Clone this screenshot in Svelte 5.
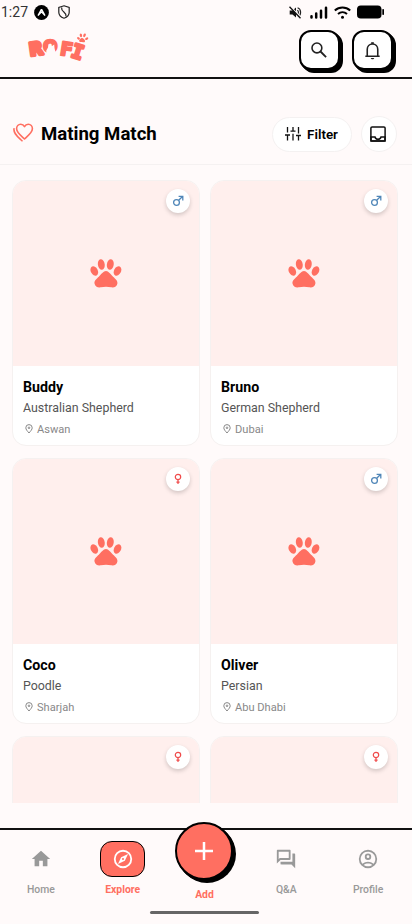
<script>
	let active = 'Explore';

	const pets = [
		{ name: 'Buddy', breed: 'Australian Shepherd', city: 'Aswan', sex: 'male' },
		{ name: 'Bruno', breed: 'German Shepherd', city: 'Dubai', sex: 'male' },
		{ name: 'Coco', breed: 'Poodle', city: 'Sharjah', sex: 'female' },
		{ name: 'Oliver', breed: 'Persian', city: 'Abu Dhabi', sex: 'male' },
		{ name: '', breed: '', city: '', sex: 'female' },
		{ name: '', breed: '', city: '', sex: 'female' }
	];

	const tabs = [
		{ label: 'Home', icon: 'M10 20v-6h4v6h5v-8h3L12 3 2 12h3v8z' },
		{ label: 'Explore', icon: 'M12 2a10 10 0 1 0 0 20 10 10 0 0 0 0-20zm0 18a8 8 0 1 1 0-16 8 8 0 0 1 0 16zm-5.500-2.500 7.510-3.490L17.500 6.500 9.990 9.990 6.500 17.500zm5.500-6.600a1.100 1.100 0 1 1 0 2.200 1.100 1.100 0 0 1 0-2.200z' },
		{ label: 'Add', icon: '' },
		{ label: 'Q&A', icon: 'M15 4v7H5.170L4 12.170V4h11m1-2H3c-.55 0-1 .45-1 1v14l4-4h10c.55 0 1-.45 1-1V3c0-.55-.45-1-1-1zm5 4h-2v9H6v2c0 .55.45 1 1 1h11l4 4V7c0-.55-.45-1-1-1z' },
		{ label: 'Profile', icon: 'M12 2a10 10 0 1 0 0 20 10 10 0 0 0 0-20zM7.350 18.500C8.660 17.560 10.260 17 12 17s3.340.56 4.650 1.500C15.340 19.440 13.740 20 12 20s-3.340-.56-4.650-1.500zm10.790-1.380a9.950 9.950 0 0 0-12.280 0A8 8 0 1 1 20 12c0 1.950-.7 3.730-1.860 5.120zM12 6a3.500 3.500 0 1 0 0 7 3.500 3.500 0 0 0 0-7zm0 5a1.500 1.500 0 1 1 0-3 1.500 1.500 0 0 1 0 3z' }
	];

	const select = (label) => {
		active = label;
	};
</script>

<div class="screen">
	<div class="status">
		<div class="statusLeft">
			<span>1:27</span>
			<svg width="15" height="15" viewBox="0 0 15 15">
				<circle cx="7.5" cy="7.5" r="7.400" fill="#000" />
				<path d="M4 10.600 7.200 4.700h.6L11 10.600M4 10.600l3.500-3.700 3.500 3.700" fill="none" stroke="#fff" stroke-width="1.300" />
			</svg>
			<svg class="shield" width="12" height="14" viewBox="0 0 12 14" fill="none" stroke="#222" stroke-width="1.200">
				<path d="M6 .8 11.200 2.500v4.700c0 2.900-2.200 5-5.200 6-3-1-5.200-3.100-5.200-6V2.500z" />
				<path d="M3.600 2.500C2.800 7.200 9 7 8 11.500" />
			</svg>
		</div>
		<div class="statusRight">
			<svg class="mute" width="13" height="13" viewBox="0 0 13 13">
				<path d="M.7 4.500h2.800L7 1.500v10l-3.500-3H.7z" fill="#111" />
				<path d="M8.300 4.300c1.500.8 1.500 3.300 0 4.200M8.600 1.800c3.900 1.300 3.900 7.200.5 9" fill="none" stroke="#222" stroke-width="1.200" />
				<path d="m1.500.5 11 11.500" stroke="#fffafa" stroke-width="1.300" />
				<path d="m.5.700 11 11.500" stroke="#111" stroke-width="1.300" />
			</svg>
			<svg class="signal" width="18" height="13" viewBox="0 0 18 13" stroke="#000" stroke-width="2.500" stroke-linecap="round">
				<path d="M1.500 10.200v1.300M6.200 7.500v4M11 4.700v6.800M16 1.700v9.800" />
			</svg>
			<svg class="wifi" width="17" height="13" viewBox="0 0 17 13" fill="none" stroke="#000" stroke-width="2">
				<path d="M.8 4.500c4.400-4 11-4 15.400 0M4 8c2.600-2.300 6.400-2.300 9 0" />
				<circle cx="8.500" cy="11.300" r="1.500" fill="#000" stroke="none" />
			</svg>
			<svg width="28" height="14" viewBox="0 0 28 14">
				<rect x="0" y=".5" width="24.500" height="13" rx="3.800" />
				<rect x="25.300" y="4" width="1.700" height="6" rx=".8" />
			</svg>
		</div>
	</div>

	<header>
		<svg class="logo" width="64" height="32" viewBox="0 0 64 32" fill="#ff6f61" stroke="#ff6f61" stroke-linejoin="round">
			<text class="letter" x="3" y="23.300" font-size="18" stroke-width="3.200" transform="rotate(-8 9 17)">R</text>
			<text class="letter" x="17.300" y="19.500" font-size="16.500" stroke-width="2.500">O</text>
			<path d="M20.300 25v-6.500l1.700-3 .8-3.400 1.800 2.100 1.500-.2 2.100-1.600.3 3.500.8 3.500V25z" fill="#fffafa" stroke="none" />
			<text class="letter" x="34.200" y="23.500" font-size="19" stroke-width="1.900" transform="rotate(9 39 17)">F</text>
			<text class="bone" x="46" y="26.300" font-size="19.500" stroke-width="2.600" transform="rotate(18 51 19)">I</text>
			<g stroke="none">
				<ellipse cx="52.500" cy="6.300" rx="1.100" ry="1.600" transform="rotate(-50 52.500 6.300)" />
				<ellipse cx="54.900" cy="3.300" rx="1.200" ry="1.900" transform="rotate(-10 54.900 3.300)" />
				<ellipse cx="58.500" cy="3.300" rx="1.200" ry="1.900" transform="rotate(25 58.500 3.300)" />
				<ellipse cx="60.700" cy="6.700" rx="1.100" ry="1.700" transform="rotate(60 60.700 6.700)" />
				<path d="M56.400 5.900c1.700.5 3.200 2.700 2.500 3.900-.7 1-1.700.2-3 .2s-2.300.3-2.700-.7c-.4-1.300 1.700-3.600 3.200-3.400z" />
			</g>
		</svg>
		<div class="actions">
			<button class="square" aria-label="Search">
				<svg width="20" height="20" viewBox="0 0 24 24" fill="none" stroke="#222" stroke-width="1.900">
					<circle cx="9.500" cy="9.500" r="5.900" />
					<path d="m13.800 13.800 6.700 6.700" stroke-width="2.200" />
				</svg>
			</button>
			<button class="square" aria-label="Notifications">
				<svg width="21" height="21" viewBox="0 0 24 24" fill="none" stroke="#222" stroke-width="1.800">
					<path d="M3.800 18.500h16.400M6 18.500V10.700C6 7 8.500 4.500 12 4.500s6 2.500 6 6.200v7.800" />
					<path d="M12 2.500v2" stroke-width="3" />
					<path d="M10 20.500h4c-.3 1-1 1.500-2 1.500s-1.700-.5-2-1.500z" fill="#222" stroke="none" />
				</svg>
			</button>
		</div>
	</header>

	<div class="titleBar">
		<svg class="hearts" width="22" height="20" viewBox="0 0 22 20" fill="none" stroke="#ff6f61" stroke-width="1.600" stroke-linecap="round" stroke-linejoin="round">
			<path d="M11.500 16C8.200 12.900 3.600 9.600 3.600 5.800c0-2.600 1.800-4.500 4.100-4.500 1.700 0 3 .8 3.800 2.300.8-1.500 2.100-2.300 3.800-2.300 2.300 0 4.100 1.900 4.100 4.500 0 3.800-4.600 7.100-7.900 10.200z" />
			<path d="M1 5.700C.3 10.500 4.600 13.500 9 17.800" />
		</svg>
		<h1>Mating Match</h1>
		<button class="filter">
			<svg width="16" height="16" viewBox="0 0 16 16" stroke="#111" stroke-width="1.300" fill="none">
				<path d="M2.500 1v5.500M0 9h5M2.500 9v5.500M8 1v4M5.500 5.200h5M8 7.800v6.700M13.500 1v6.500M11 9.500h5M13.500 9.500v5" />
			</svg>
			Filter
		</button>
		<button class="inbox" aria-label="Inbox">
			<svg width="16" height="16" viewBox="0 0 16 16" fill="none" stroke="#111" stroke-width="1.500">
				<rect x=".9" y=".9" width="14.200" height="14.200" rx="1.200" />
				<path d="M1 11h4c.7 3 5.300 3 6 0h4v4H1z" />
			</svg>
		</button>
	</div>

	<main>
		{#each pets as pet}
			<div class="card">
				<div class="photo">
					<svg width="32" height="29" viewBox="0 0 32 29" fill="#ff6f61">
						<ellipse cx="4.300" cy="12" rx="3.500" ry="5" transform="rotate(-27 4.300 12)" />
						<ellipse cx="11.300" cy="5.500" rx="3.400" ry="5.300" transform="rotate(-8 11.300 5.500)" />
						<ellipse cx="20.300" cy="5.500" rx="3.400" ry="5.300" transform="rotate(8 20.300 5.500)" />
						<ellipse cx="27.500" cy="12" rx="3.500" ry="5" transform="rotate(27 27.500 12)" />
						<path d="M16 12c-2.600 0-4.700 3.200-7.200 5.700C6.300 20.100 4 21.700 4.500 24.500c.6 3 3.200 4.300 6.300 3.800 3.500-.7 6.900-.7 10.400 0 3.100.5 5.700-.8 6.200-3.800.5-2.800-1.800-4.400-4.300-6.800-2.500-2.500-4.500-5.700-7.100-5.700z" />
					</svg>
					<div class="sex {pet.sex}">
						{#if pet.sex === 'male'}
							<svg width="12" height="12" viewBox="0 0 12 12" fill="none" stroke="#4f86b8" stroke-width="1.300">
								<circle cx="4.500" cy="7.500" r="2.900" />
								<path d="M6.700 5.300 10.500 1.500M6.600 1.300h4.200v4.200" />
							</svg>
						{:else}
							<svg width="12" height="12" viewBox="0 0 12 12" fill="none" stroke="#f04b4b" stroke-width="1.200">
								<circle cx="6" cy="4" r="2.700" />
								<path d="M6 7v4M4.400 9.200h3.200" />
							</svg>
						{/if}
					</div>
				</div>
				{#if pet.name}
					<div class="info">
						<div class="name">{pet.name}</div>
						<div class="breed">{pet.breed}</div>
						<div class="city">
							<svg width="8" height="10" viewBox="0 0 8 10" fill="none" stroke="#888" stroke-width="1">
								<path d="M4 9C2.200 6.900.8 5.400.8 3.800a3.200 3.200 0 0 1 6.400 0C7.200 5.400 5.800 6.900 4 9z" />
								<circle cx="4" cy="3.800" r=".8" />
							</svg>
							{pet.city}
						</div>
					</div>
				{/if}
			</div>
		{/each}
	</main>

	<nav>
		{#each tabs as tab}
			<button class="tab" class:active={tab.label === active} class:add={tab.label === 'Add'} on:click={() => select(tab.label)}>
				{#if tab.label === 'Add'}
					<span class="plus">
						<svg width="20" height="20" viewBox="0 0 20 20" stroke="#fff" stroke-width="2.500">
							<path d="M10 1v18M1 10h18" />
						</svg>
					</span>
				{:else}
					<span class="pill">
						<svg width="22" height="22" viewBox="0 0 24 24" fill="currentColor" fill-rule="evenodd">
							<path d={tab.icon} />
						</svg>
					</span>
				{/if}
				<span class="label">{tab.label}</span>
			</button>
		{/each}
	</nav>
	<div class="handle"></div>
</div>

<style>
	:global(body) {
		background: #fffafa;
	}

	.screen {
		width: 412px;
		height: 924px;
		display: flex;
		flex-direction: column;
		overflow: hidden;
		background: #fffafa;
		font-family: Roboto, sans-serif;
		color: #000;
	}

	button {
		margin: 0;
		padding: 0;
		border: none;
		background: none;
		font-family: inherit;
		color: inherit;
	}

	svg {
		display: block;
		flex: none;
	}

	.status {
		height: 24px;
		box-sizing: border-box;
		padding: 0 27px 0 1px;
		display: flex;
		justify-content: space-between;
		align-items: center;
		font-size: 14px;
		color: #333;
	}

	.statusLeft, .statusRight {
		display: flex;
		align-items: center;
	}

	.statusLeft span {
		width: 33px;
		margin-top: -1px;
	}

	.shield {
		margin-left: 9px;
	}

	.signal {
		margin-left: 8px;
	}

	.wifi {
		margin: 0 6px;
	}

	header {
		height: 55px;
		box-sizing: border-box;
		padding: 6px 19px 0 26px;
		display: flex;
		justify-content: space-between;
		border-bottom: 2px solid #111;
	}

	.logo {
		margin-top: 2px;
	}

	.letter {
		font-family: "DejaVu Sans", sans-serif;
		font-weight: 700;
	}

	.bone {
		font-family: "DejaVu Sans Mono", monospace;
		font-weight: 700;
	}

	.actions {
		display: flex;
		gap: 12px;
	}

	.square {
		width: 41px;
		height: 40px;
		display: flex;
		justify-content: center;
		align-items: center;
		box-sizing: border-box;
		border: 2px solid #000;
		border-radius: 12px;
		background: #fff;
		box-shadow: 1px 1px 0 #000, 2px 2px 0 #000, 3px 3px 0 #000;
	}

	.square svg {
		margin-right: 1px;
	}

	.titleBar {
		height: 86px;
		box-sizing: border-box;
		padding: 25px 15px 0 13px;
		display: flex;
		align-items: center;
		border-bottom: 1px solid #f5f1f1;
	}

	.hearts {
		margin-top: -2px;
	}

	h1 {
		flex: 1;
		margin: 0 0 0 6px;
		font-size: 18.600px;
		font-weight: 700;
		white-space: nowrap;
	}

	.filter {
		width: 80px;
		height: 35px;
		display: flex;
		align-items: center;
		justify-content: center;
		gap: 6px;
		box-sizing: border-box;
		padding-right: 1px;
		border: 1px solid #f4f1f1;
		border-radius: 18px;
		background: #fff;
		font-size: 13.400px;
		font-weight: 600;
	}

	.inbox {
		width: 36px;
		height: 36px;
		margin-left: 9px;
		display: flex;
		align-items: center;
		justify-content: center;
		box-sizing: border-box;
		padding-right: 2px;
		border: 1px solid #f4f1f1;
		border-radius: 50%;
		background: #fff;
	}

	main {
		height: 638px;
		box-sizing: border-box;
		margin-bottom: 25px;
		padding: 15px 14px 0 12px;
		flex: none;
		display: grid;
		grid-template-columns: 188px 188px;
		grid-auto-rows: 266px;
		gap: 12px 10px;
		overflow: hidden;
	}

	.card {
		box-sizing: border-box;
		border: 1px solid #f5f1f0;
		border-radius: 14px;
		background: #fff;
		overflow: hidden;
	}

	.photo {
		height: 185px;
		position: relative;
		display: flex;
		align-items: center;
		justify-content: center;
		background: #ffefed;
	}

	.photo > svg {
		margin-right: 1px;
	}

	.sex {
		position: absolute;
		top: 8px;
		right: 9px;
		width: 24px;
		height: 24px;
		display: flex;
		align-items: center;
		justify-content: center;
		border-radius: 50%;
		background: #fff;
		box-shadow: 0 2px 4px rgba(0, 0, 0, 0.18);
	}

	.info {
		padding: 12px 10px;
	}

	.name {
		font-size: 14.200px;
		line-height: 18px;
		font-weight: 700;
	}

	.breed {
		margin-top: 4px;
		font-size: 12.400px;
		line-height: 16px;
		color: #555;
	}

	.city {
		margin-top: 6px;
		padding-left: 2px;
		display: flex;
		align-items: center;
		gap: 4px;
		font-size: 11.100px;
		line-height: 16px;
		color: #888;
	}

	.city svg {
		margin: -2px 0 0;
	}

	nav {
		height: 82px;
		flex: none;
		box-sizing: border-box;
		padding: 0 3px 0 0;
		display: flex;
		border-top: 2px solid #111;
	}

	.tab {
		flex: 1;
		display: flex;
		flex-direction: column;
		align-items: center;
		padding-top: 11px;
		color: #999;
	}

	.pill {
		width: 45px;
		height: 36px;
		display: flex;
		align-items: center;
		justify-content: center;
		box-sizing: border-box;
		border: 1px solid transparent;
		border-radius: 12px;
	}

	.active .pill {
		border-color: #000;
		background: #ff6f61;
		color: #fff;
	}

	.label {
		margin-top: 6px;
		font-size: 10.400px;
		line-height: 13px;
		font-weight: 500;
	}

	.active .label, .add .label {
		color: #ff6f61;
		font-weight: 700;
	}

	.add {
		padding-top: 0;
	}

	.plus {
		width: 58px;
		height: 58px;
		margin-top: -8px;
		display: flex;
		align-items: center;
		justify-content: center;
		box-sizing: border-box;
		border: 2px solid #000;
		border-radius: 50%;
		background: #ff6f61;
		box-shadow: 1px 1px 0 #000, 2px 2px 0 #000, 3px 3px 0 #000;
	}

	.add .label {
		margin-top: 8px;
	}

	.handle {
		width: 109px;
		height: 3px;
		margin: 1px 0 0 150px;
		border-radius: 2px;
		background: #666;
	}
</style>
